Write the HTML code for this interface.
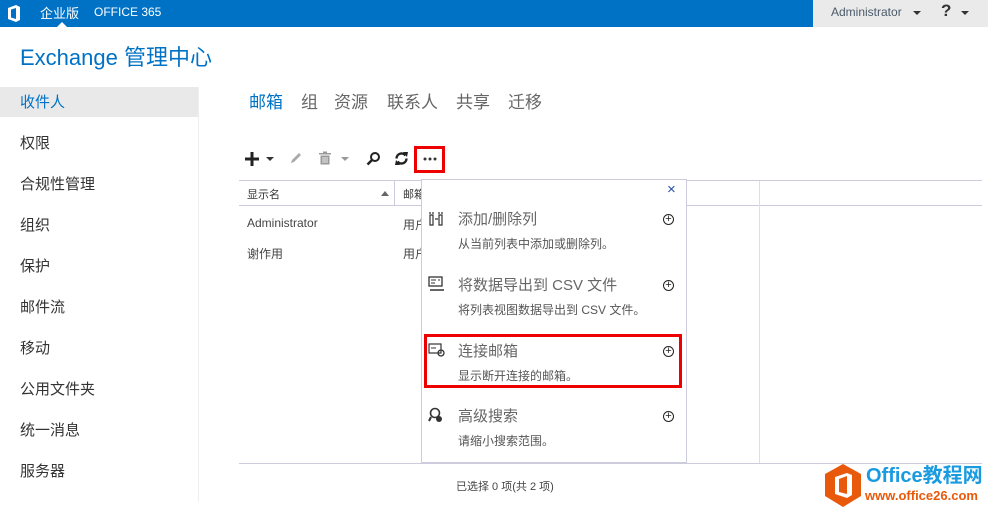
<!DOCTYPE html>
<html><head><meta charset="utf-8"><style>
*{margin:0;padding:0;box-sizing:border-box}
body{width:988px;height:513px;overflow:hidden;background:#fff;font-family:"Segoe UI","Liberation Sans","Noto Sans CJK SC",sans-serif;color:#333;position:relative}
.a{position:absolute;white-space:nowrap}
.top{position:absolute;left:0;top:0;width:988px;height:27px;background:#0072c6}
.gray{position:absolute;left:813px;top:0;width:175px;height:27px;background:#eaeaea}
.nav{font-size:15px;color:#333}
.tab{font-size:17px;color:#666;top:88px}
.menu .t{font-size:15px;color:#666}
.menu .d{font-size:12px;color:#555}
.plus{width:11px;height:11px;border:1px solid #222;border-radius:50%;font-size:11px;line-height:8px;text-align:center;color:#222}
</style></head><body>
<div class="top"></div>
<div class="gray"></div>
<svg class="a" style="left:7px;top:5px" width="14" height="17" viewBox="0 0 14 17"><path d="M1 3 L9 0 L13 2 V15 L9 17 L1 14 Z M4 4.5 V12.5 L9 14 V3 Z" fill="#fff" fill-rule="evenodd"/></svg>
<div class="a" style="left:40px;top:3px;color:#fff;font-size:13px">企业版</div>
<div class="a" style="left:57px;top:22px;width:0;height:0;border-left:5px solid transparent;border-right:5px solid transparent;border-bottom:5px solid #fff"></div>
<div class="a" style="left:94px;top:5px;color:#fff;font-size:12px">OFFICE 365</div>
<div class="a" style="left:831px;top:5px;color:#4a5a6a;font-size:12px">Administrator</div>
<div class="a" style="left:913px;top:11px;border-left:4px solid transparent;border-right:4px solid transparent;border-top:4px solid #333"></div>
<div class="a" style="left:941px;top:1px;color:#333;font-size:17px;font-weight:bold">?</div>
<div class="a" style="left:961px;top:11px;border-left:4px solid transparent;border-right:4px solid transparent;border-top:4px solid #333"></div>

<div class="a" style="left:20px;top:40px;font-size:22px;color:#0072c6">Exchange 管理中心</div>

<div class="a" style="left:0;top:87px;width:198px;height:30px;background:#e9e9ea"></div>
<div class="a" style="left:198px;top:87px;width:1px;height:415px;background:#eee"></div>
<div class="a nav" style="left:20px;top:91px;color:#0072c6">收件人</div>
<div class="a nav" style="left:20px;top:132px">权限</div>
<div class="a nav" style="left:20px;top:173px">合规性管理</div>
<div class="a nav" style="left:20px;top:214px">组织</div>
<div class="a nav" style="left:20px;top:255px">保护</div>
<div class="a nav" style="left:20px;top:296px">邮件流</div>
<div class="a nav" style="left:20px;top:337px">移动</div>
<div class="a nav" style="left:20px;top:378px">公用文件夹</div>
<div class="a nav" style="left:20px;top:419px">统一消息</div>
<div class="a nav" style="left:20px;top:460px">服务器</div>

<div class="a tab" style="left:249px;color:#0072c6">邮箱</div>
<div class="a tab" style="left:301px">组</div>
<div class="a tab" style="left:334px">资源</div>
<div class="a tab" style="left:387px">联系人</div>
<div class="a tab" style="left:456px">共享</div>
<div class="a tab" style="left:508px">迁移</div>

<!-- toolbar -->
<svg class="a" style="left:244px;top:151px" width="16" height="16"><path d="M8 1 V15 M1 8 H15" stroke="#222" stroke-width="3"/></svg>
<div class="a" style="left:266px;top:157px;border-left:4px solid transparent;border-right:4px solid transparent;border-top:4px solid #333"></div>
<svg class="a" style="left:289px;top:151px" width="14" height="14"><path d="M2 12 L3 9 L10 2 L12 4 L5 11 Z" fill="#aaa"/></svg>
<svg class="a" style="left:318px;top:151px" width="14" height="14"><path d="M1 2 H13 V3.5 H1 Z M5 0.5 H9 V2 H5 Z M2.5 4.5 H11.5 V13.5 H2.5 Z" fill="#999"/><path d="M5 6 V12 M7 6 V12 M9 6 V12" stroke="#fff" stroke-width="0.8"/></svg>
<div class="a" style="left:341px;top:157px;border-left:4px solid transparent;border-right:4px solid transparent;border-top:4px solid #999"></div>
<svg class="a" style="left:366px;top:151px" width="15" height="15"><circle cx="9" cy="6" r="4" fill="none" stroke="#222" stroke-width="2"/><path d="M6 9 L1.5 13.5" stroke="#222" stroke-width="2.5"/></svg>
<svg class="a" style="left:394px;top:151px" width="15" height="15"><path d="M2.5 7.5 A5 5 0 0 1 11.5 4.5" fill="none" stroke="#222" stroke-width="2.4"/><path d="M12.5 7.5 A5 5 0 0 1 3.5 10.5" fill="none" stroke="#222" stroke-width="2.4"/><path d="M9 1 L14 1 L13 6 Z M6 14 L1 14 L2 9 Z" fill="#222"/></svg>
<div class="a" style="left:414px;top:146px;width:31px;height:27px;border:3px solid #e00"></div>
<svg class="a" style="left:423px;top:157px" width="14" height="4"><circle cx="2" cy="2" r="1.5" fill="#333"/><circle cx="7" cy="2" r="1.5" fill="#333"/><circle cx="12" cy="2" r="1.5" fill="#333"/></svg>

<!-- table -->
<div class="a" style="left:239px;top:180px;width:743px;height:1px;background:#ccd"></div>
<div class="a" style="left:239px;top:205px;width:743px;height:1px;background:#ccd"></div>
<div class="a" style="left:239px;top:463px;width:743px;height:1px;background:#ccd"></div>
<div class="a" style="left:394px;top:181px;width:1px;height:24px;background:#ccd"></div>
<div class="a" style="left:759px;top:181px;width:1px;height:282px;background:#dde"></div>
<div class="a" style="left:247px;top:186px;font-size:11px;color:#333">显示名</div>
<div class="a" style="left:381px;top:191px;border-left:4px solid transparent;border-right:4px solid transparent;border-bottom:5px solid #666"></div>
<div class="a" style="left:403px;top:186px;font-size:11px;color:#333">邮箱</div>
<div class="a" style="left:247px;top:216px;font-size:12px;color:#444">Administrator</div>
<div class="a" style="left:403px;top:216px;font-size:12px;color:#444">用户</div>
<div class="a" style="left:247px;top:245px;font-size:12px;color:#444">谢作用</div>
<div class="a" style="left:403px;top:245px;font-size:12px;color:#444">用户</div>
<div class="a" style="left:456px;top:478px;font-size:11px;color:#444">已选择 0 项(共 2 项)</div>

<!-- dropdown -->
<div class="a menu" style="left:421px;top:179px;width:266px;height:284px;background:#fff;border:1px solid #ccd">
<div class="a" style="left:245px;top:1px;color:#2a4fa8;font-size:15px">×</div>
<svg class="a" style="left:6px;top:31px" width="16" height="16"><path d="M2 4 H5 V14 H2 Z M11 4 H14 V14 H11 Z M2 1 V3 M5 1 V3 M11 1 V3 M14 1 V3 M7 8 H10" stroke="#333" stroke-width="1.2" fill="none"/></svg>
<div class="a t" style="left:36px;top:28px">添加/删除列</div>
<div class="a d" style="left:36px;top:55px">从当前列表中添加或删除列。</div>
<div class="a plus" style="left:241px;top:34px">+</div>
<svg class="a" style="left:6px;top:96px" width="17" height="16"><rect x="1" y="1" width="13" height="9" fill="none" stroke="#333" stroke-width="1.3"/><path d="M3 4 H8 M10 4 H12 M3 7 H7" stroke="#333"/><path d="M2 14 H16" stroke="#333" stroke-width="1.5"/></svg>
<div class="a t" style="left:36px;top:94px">将数据导出到 CSV 文件</div>
<div class="a d" style="left:36px;top:121px">将列表视图数据导出到 CSV 文件。</div>
<div class="a plus" style="left:241px;top:100px">+</div>
<svg class="a" style="left:6px;top:163px" width="17" height="14"><rect x="1" y="1" width="12" height="9" fill="none" stroke="#333" stroke-width="1.2"/><path d="M3 5 H8" stroke="#333"/><circle cx="13" cy="10" r="3" fill="none" stroke="#333" stroke-width="1.3"/></svg>
<div class="a t" style="left:36px;top:160px">连接邮箱</div>
<div class="a d" style="left:36px;top:187px">显示断开连接的邮箱。</div>
<div class="a plus" style="left:241px;top:166px">+</div>
<svg class="a" style="left:6px;top:227px" width="17" height="17"><circle cx="7" cy="6" r="4.5" fill="none" stroke="#333" stroke-width="1.6"/><path d="M3 10 L1 14" stroke="#333" stroke-width="2"/><circle cx="11" cy="12" r="3" fill="#333"/></svg>
<div class="a t" style="left:36px;top:225px">高级搜索</div>
<div class="a d" style="left:36px;top:252px">请缩小搜索范围。</div>
<div class="a plus" style="left:241px;top:231px">+</div>
</div>
<div class="a" style="left:424px;top:334px;width:258px;height:54px;border:3px solid #e00"></div>

<!-- watermark -->
<svg class="a" style="left:824px;top:464px" width="38" height="43"><path d="M19 0 L37 10 V32 L19 43 L1 32 V10 Z" fill="#e8590c"/><path d="M11 13 L23 9 L28 11 V31 L23 34 L11 30 Z M15 15 V28 L23 30 V12 Z" fill="#fff" fill-rule="evenodd"/></svg>
<div class="a" style="left:866px;top:465px;font-size:20px;font-weight:bold;color:#1a9be0;line-height:22px">Office教程网</div>
<div class="a" style="left:865px;top:488px;font-size:13px;font-weight:bold;color:#e8590c">www.office26.com</div>
</body></html>
